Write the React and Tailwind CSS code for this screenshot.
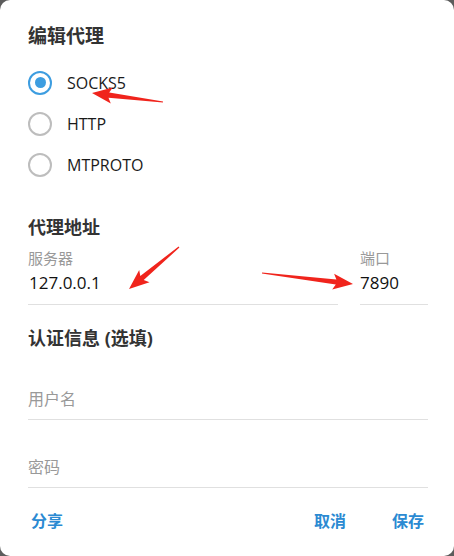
import React, { useState } from 'react';

const font = { fontFamily: '"Open Sans", "Noto Sans CJK SC", sans-serif' };

// red annotation arrows from the screenshot, tail -> tip
const arrows = [
  { tail: [163, 102], tip: [92, 93] },
  { tail: [179, 247], tip: [129, 289] },
  { tail: [262, 273], tip: [353, 284] },
];

function arrowPoints({ tail, tip }) {
  const [tx, ty] = tail;
  const [px, py] = tip;
  const len = Math.hypot(px - tx, py - ty);
  const dx = (px - tx) / len;
  const dy = (py - ty) / len;
  const nx = -dy;
  const ny = dx;
  const head = 17;
  const bx = px - dx * head;
  const by = py - dy * head;
  const pt = (x, y) => `${x.toFixed(1)},${y.toFixed(1)}`;
  return [
    pt(tx + nx * 0.6, ty + ny * 0.6),
    pt(bx + nx * 2.6, by + ny * 2.6),
    pt(bx - dx * 3 + nx * 8, by - dy * 3 + ny * 8),
    pt(px, py),
    pt(bx - dx * 3 - nx * 8, by - dy * 3 - ny * 8),
    pt(bx - nx * 2.6, by - ny * 2.6),
    pt(tx - nx * 0.6, ty - ny * 0.6),
  ].join(' ');
}

function Radio({ label, checked, onClick }) {
  return (
    <button onClick={onClick} className="h-[41px] flex items-center gap-[15px] text-left">
      <span
        className={
          checked
            ? 'w-[24px] h-[24px] rounded-full border-2 border-[#3d9de0] flex items-center justify-center'
            : 'w-[24px] h-[24px] rounded-full border-2 border-[#bdbdbd]'
        }
      >
        {checked && <span className="w-[11px] h-[11px] rounded-full bg-[#3d9de0]" />}
      </span>
      <span className="text-[16px] text-[#1a1a1a]">{label}</span>
    </button>
  );
}

export default function App() {
  const [type, setType] = useState('SOCKS5');

  return (
    <div className="w-[454px] h-[556px] bg-[#5c5c5c]" style={font}>
      <div className="relative h-full bg-white rounded-[10px] pl-[28px] pr-[26px] pt-[22px]">
        <div className="h-[28px] flex items-center text-[19px] font-bold text-[#333]">编辑代理</div>

        <div className="mt-[12px] flex flex-col items-start">
          {['SOCKS5', 'HTTP', 'MTPROTO'].map(t => (
            <Radio key={t} label={t} checked={type === t} onClick={() => setType(t)} />
          ))}
        </div>

        <div className="mt-[30px] h-[24px] flex items-center text-[18px] font-bold text-[#333]">代理地址</div>

        <div className="flex gap-[22px]">
          <div className="w-[310px]">
            <div className="mt-[9px] h-[20px] flex items-center text-[15px] text-[#999]">服务器</div>
            <div className="mt-[3px] h-[34px] pb-[10px] border-b border-[#e0e0e0] flex items-center pl-[1px] text-[17px] text-[#111]">127.0.0.1</div>
          </div>
          <div className="w-[68px]">
            <div className="mt-[9px] h-[20px] flex items-center text-[15px] text-[#999]">端口</div>
            <div className="mt-[3px] h-[34px] pb-[10px] border-b border-[#e0e0e0] flex items-center text-[17px] text-[#111]">7890</div>
          </div>
        </div>

        <div className="mt-[21px] h-[24px] flex items-center text-[18px] font-bold text-[#333]">认证信息 (选填)</div>

        <div className="mt-[37px] h-[33px] pb-[9px] border-b border-[#e0e0e0] flex items-center text-[16px] text-[#999]">用户名</div>
        <div className="mt-[35px] h-[33px] pb-[9px] border-b border-[#e0e0e0] flex items-center text-[16px] text-[#999]">密码</div>

        <div className="mt-[21px] h-[24px] flex items-center text-[16px] font-bold text-[#2b8ad2]">
          <button className="ml-[3px]">分享</button>
          <div className="flex-1" />
          <button>取消</button>
          <button className="ml-[46px] mr-[4px]">保存</button>
        </div>

        <svg className="absolute inset-0 pointer-events-none" width="454" height="556">
          {arrows.map((a, i) => (
            <polygon key={i} points={arrowPoints(a)} fill="#f0241c" />
          ))}
        </svg>
      </div>
    </div>
  );
}
